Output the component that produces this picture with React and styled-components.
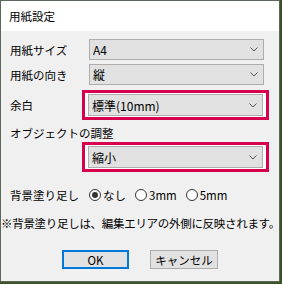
import React from 'react';
import styled, { createGlobalStyle } from 'styled-components';

const GlobalStyle = createGlobalStyle`
    html, body {
        margin:0;
        padding:0;
        background:#3b5227;
    }
    body {
        width:282px;
        height:284px;
        overflow:hidden;
        font-family:"Noto Sans CJK JP", "Noto Sans", sans-serif;
        color:#000;
    }
`;

const Dialog = styled.div`
    width:278px;
    height:280px;
    border:1px solid #5c6857;
    background:#f0f0f0;
    display:flex;
    flex-direction:column;
`;

const TitleBar = styled.div`
    height:30px;
    background:#fff;
    padding-left:8px;
    display:flex;
    align-items:center;
    font-size:11.5px;
`;

const Body = styled.div`
    display:flex;
    flex-direction:column;
    padding:8px 0 0 9px;
    font-size:11.5px;
`;

const Row = styled.div`
    display:flex;
    align-items:center;
    margin-top:${p => p.$mt || 0}px;
`;

const Label = styled.div`
    width:${p => p.$w || 79}px;
    flex:none;
    white-space:nowrap;
`;

const Highlight = styled.div`
    border:3px solid #d6004f;
    background:#fff;
    padding:1px 3px;
    margin-left:-7px;
    display:flex;
`;

const SelectBox = styled.div`
    box-sizing:border-box;
    width:175px;
    height:${p => p.$h || 21}px;
    border:1px solid #adadad;
    background:#e1e1e1;
    display:flex;
    align-items:center;
    justify-content:space-between;
    padding:0 5px 0 3px;
    font-size:12px;
`;

const Chevron = () => (
    <svg width="8" height="5" viewBox="0 0 8 5">
        <polyline points="0.5,0.5 4,4 7.5,0.5" fill="none" stroke="#555" strokeWidth="1" />
    </svg>
);

const Select = ({ value, h }) => (
    <SelectBox $h={h}>
        <span>{value}</span>
        <Chevron />
    </SelectBox>
);

const RadioGroup = styled.div`
    display:flex;
    align-items:center;
    gap:9px;
`;

const RadioItem = styled.label`
    display:flex;
    align-items:center;
    gap:2px;
`;

const RadioDot = styled.span`
    box-sizing:border-box;
    width:12px;
    height:12px;
    border-radius:50%;
    border:1px solid #333;
    background:#fff;
    display:flex;
    align-items:center;
    justify-content:center;
    &::after{
        content:"";
        width:6px;
        height:6px;
        border-radius:50%;
        background:${p => p.$checked ? '#333' : 'transparent'};
    }
`;

const Note = styled.div`
    margin:12px 0 0 -9px;
    text-align:center;
    letter-spacing:-0.3px;
    white-space:nowrap;
`;

const ButtonBar = styled.div`
    display:flex;
    justify-content:center;
    gap:21px;
    margin:19px 0 0 -9px;
`;

const Button = styled.div`
    box-sizing:border-box;
    width:${p => p.$w}px;
    height:19px;
    display:flex;
    align-items:center;
    justify-content:center;
    background:#e1e1e1;
    border:${p => p.$primary ? '2px solid #0078d7' : '1px solid #adadad'};
    font-size:11.5px;
`;

function App() {
    return (
        <>
            <GlobalStyle />
            <Dialog>
                <TitleBar>用紙設定</TitleBar>
                <Body>
                    <Row>
                        <Label>用紙サイズ</Label>
                        <Select value="A4" />
                    </Row>
                    <Row $mt={4}>
                        <Label>用紙の向き</Label>
                        <Select value="縦" />
                    </Row>
                    <Row $mt={5}>
                        <Label>余白</Label>
                        <Highlight>
                            <Select value="標準(10mm)" h={22} />
                        </Highlight>
                    </Row>
                    <Row $mt={5}>
                        <Label $w={150}>オブジェクトの調整</Label>
                    </Row>
                    <Row $mt={1}>
                        <Label />
                        <Highlight>
                            <Select value="縮小" h={22} />
                        </Highlight>
                    </Row>
                    <Row $mt={15}>
                        <Label>背景塗り足し</Label>
                        <RadioGroup>
                            <RadioItem><RadioDot $checked />なし</RadioItem>
                            <RadioItem><RadioDot />3mm</RadioItem>
                            <RadioItem><RadioDot />5mm</RadioItem>
                        </RadioGroup>
                    </Row>
                    <Note>※背景塗り足しは、編集エリアの外側に反映されます。</Note>
                    <ButtonBar>
                        <Button $primary $w={67}>OK</Button>
                        <Button $w={68}>キャンセル</Button>
                    </ButtonBar>
                </Body>
            </Dialog>
        </>
    );
}

export default App;
